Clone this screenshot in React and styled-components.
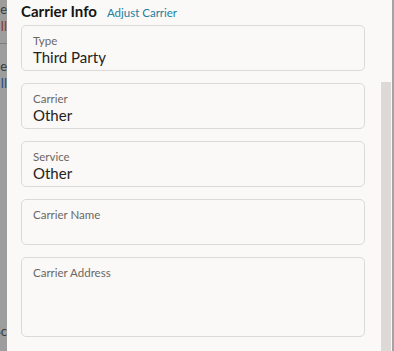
import React from 'react';
import styled, { createGlobalStyle } from 'styled-components';

const GlobalStyle = createGlobalStyle`
  html, body {
    margin: 0;
    padding: 0;
    background: #9d9d9d;
  }
  body {
    font-family: Lato, "Noto Sans", Arial, sans-serif;
  }
`

const Page = styled.div`
  display: flex;
  width: 394px;
  height: 351px;
  overflow: hidden;
`

const Backdrop = styled.div`
  width: 7px;
  flex: none;
  background: #9d9d9d;
  overflow: hidden;
  display: flex;
  flex-direction: column;
`

const BackRow = styled.div`
  height: ${props => props.h}px;
  display: flex;
  flex-direction: column;
  align-items: flex-end;
  gap: 5px;
  border-bottom: ${props => props.line ? '1px solid #7e7e7e' : 'none'};
  box-sizing: border-box;
  padding-top: ${props => props.top || 0}px;
`

const BackText = styled.span`
  white-space: nowrap;
  font-size: 13px;
  line-height: 12px;
  color: ${props => props.color || '#3b3b3b'};
`

const Panel = styled.div`
  flex: 1;
  display: flex;
  background: #faf9f7;
  border-right: 2px solid #a3a3a3;
`

const Main = styled.div`
  width: 344px;
  margin-left: 14px;
  display: flex;
  flex-direction: column;
`

const Header = styled.div`
  display: flex;
  align-items: baseline;
  gap: 10px;
  height: 25px;
  box-sizing: border-box;
`

const Title = styled.h2`
  margin: 0;
  font-size: 15px;
  font-weight: 700;
  color: #161513;
  line-height: 22px;
`

const Link = styled.a`
  font-size: 11.5px;
  color: #227ea0;
  text-decoration: none;
  cursor: pointer;
`

const Fields = styled.div`
  display: flex;
  flex-direction: column;
  gap: 12px;
`

const Field = styled.div`
  height: ${props => props.tall ? 80 : 46}px;
  box-sizing: border-box;
  border: 1px solid #dcdad6;
  border-radius: 5px;
  background: #faf9f7;
  padding: 8px 11px 0;
  display: flex;
  flex-direction: column;
`

const Label = styled.span`
  font-size: 11.5px;
  line-height: 14px;
  color: #6b6763;
`

const Value = styled.span`
  font-size: 15px;
  line-height: 18px;
  color: #242220;
`

const Spacer = styled.div`
  flex: 1;
`

const ScrollTrack = styled.div`
  width: 10px;
  margin-top: 82px;
  margin-right: 1px;
  background: #dcd9d7;
`

const fields = [
  { label: 'Type', value: 'Third Party' },
  { label: 'Carrier', value: 'Other' },
  { label: 'Service', value: 'Other' },
  { label: 'Carrier Name', value: '' },
  { label: 'Carrier Address', value: '', tall: true },
]

const App = () => {
  return (
    <Page>
      <GlobalStyle />
      <Backdrop>
        <BackRow h={44} top={3} line>
          <BackText>Name</BackText>
          <BackText color="#8a3b2c">Il</BackText>
        </BackRow>
        <BackRow h={264} top={16}>
          <BackText>Name</BackText>
          <BackText color="#2c4f8a">Il</BackText>
        </BackRow>
        <BackRow h={43} top={17}>
          <BackText>Sc</BackText>
        </BackRow>
      </Backdrop>
      <Panel>
        <Main>
          <Header>
            <Title>Carrier Info</Title>
            <Link>Adjust Carrier</Link>
          </Header>
          <Fields>
            {fields.map(f => (
              <Field key={f.label} tall={f.tall}>
                <Label>{f.label}</Label>
                {f.value && <Value>{f.value}</Value>}
              </Field>
            ))}
          </Fields>
        </Main>
        <Spacer />
        <ScrollTrack />
      </Panel>
    </Page>
  )
}

export default App
